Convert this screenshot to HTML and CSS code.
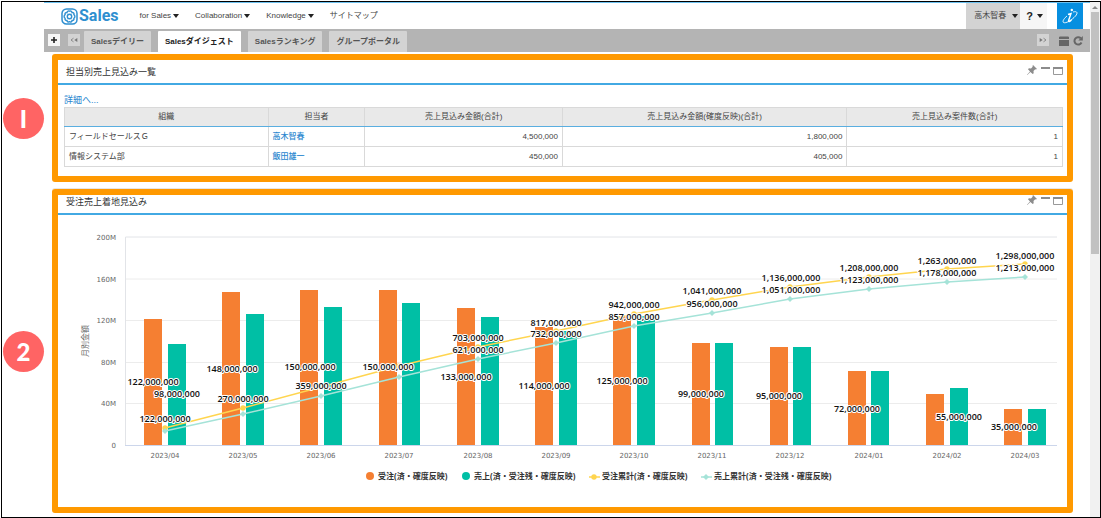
FILE: index.html
```html
<!DOCTYPE html>
<html lang="ja">
<head>
<meta charset="utf-8">
<title>Sales</title>
<link rel="stylesheet" href="styles.css">
</head>
<body>
<div class="frame">
  <div class="main">
    <header class="header">
      <a class="brand" href="#">
        <svg width="17" height="17" viewBox="0 0 17 17" fill="none" stroke="#2f8fd0">
          <rect x="1" y="1" width="15" height="15" rx="4.500" stroke-width="1.5"/>
          <path d="M8.500 3.200C10 2.600 11 3.500 11 4.600C12.300 4.400 13.400 5.400 12.900 6.700C14.200 7.400 14.200 9.600 12.900 10.300C13.400 11.600 12.300 12.700 11 12.500C11 13.700 9.800 14.300 8.500 13.700C7.200 14.300 6 13.700 6 12.500C4.700 12.700 3.600 11.600 4.100 10.300C2.800 9.600 2.800 7.400 4.100 6.700C3.600 5.400 4.700 4.400 6 4.600C6 3.500 7 2.600 8.500 3.200z" stroke-width="1.4"/>
          <circle cx="8.500" cy="8.500" r="2.200" stroke-width="1.4"/>
        </svg>
        <span>Sales</span>
      </a>
      <nav class="nav">
        <a href="#">for Sales<i class="caret"></i></a>
        <a href="#">Collaboration<i class="caret"></i></a>
        <a href="#">Knowledge<i class="caret"></i></a>
        <a href="#">サイトマップ</a>
      </nav>
      <div class="tools">
        <button class="user" type="button">高木智春<i class="caret"></i></button>
        <button class="help" type="button"><b>?</b><i class="caret"></i></button>
        <button class="info" type="button" aria-label="info">
          <svg width="16" height="18" viewBox="0 0 16 18" fill="none" stroke="#fff">
            <path d="M6 7.5 L9 6.5 L6.6 13.5 Q6.3 15 7.8 14.3 L9.5 13" stroke-width="1.4"/>
            <circle cx="9.8" cy="3" r="1.2" fill="#fff" stroke="none"/>
            <path d="M11 5 C15.5 3.8 16 6 13.5 9 C10 13 3.5 17 1.4 15.4 C0.2 14 2.5 11 5 9" stroke-width="0.9"/>
          </svg>
        </button>
      </div>
    </header>
    <div class="tabbar">
      <button class="mini add" type="button" aria-label="add"><svg width="8" height="8" viewBox="0 0 8 8"><path d="M4 1v6M1 4h6" stroke="#222" stroke-width="1.6"/></svg></button>
      <button class="mini" type="button" aria-label="previous"><svg width="8" height="6" viewBox="0 0 8 6"><path d="M3.500 1.200L1 3l2.500 1.800" fill="none" stroke="#777" stroke-width=".8"/><path d="M7.300 1v4L4.300 3z" fill="#777"/></svg></button>
      <div class="tabs">
        <a class="tab" href="#">Salesデイリー</a>
        <a class="tab active" href="#">Salesダイジェスト</a>
        <a class="tab" href="#">Salesランキング</a>
        <a class="tab" href="#">グループポータル</a>
      </div>
      <button class="mini" type="button" aria-label="next"><svg width="8" height="6" viewBox="0 0 8 6"><path d="M4.500 1.200L7 3 4.500 4.800" fill="none" stroke="#777" stroke-width=".8"/><path d="M.7 1v4l3-2z" fill="#777"/></svg></button>
      <div class="actions">
        <button class="plain" type="button" aria-label="layout"><svg width="10" height="10" viewBox="0 0 10 10"><path d="M1 .5h8l1 .5v2H0V1z" fill="#666"/><path d="M0 4h10v6H0z" fill="#666"/></svg></button>
        <button class="plain" type="button" aria-label="reload"><svg width="10" height="10" viewBox="0 0 10 10"><path d="M7.800 2.300A3.700 3.700 0 1 0 8.500 6.500" fill="none" stroke="#666" stroke-width="2"/><path d="M9.800 0v4.500H5.300z" fill="#666"/></svg></button>
      </div>
    </div>

    <section class="row">
      <span class="badge">I</span>
      <div class="panel">
        <div class="panel-head roomy">
          <h2>担当別売上見込み一覧</h2>
          <div class="panel-icons">
            <svg width="10" height="10" viewBox="0 0 10 10" fill="#8c8c8c"><path d="M6 0l4 4-1.200.5-.6-.2L6.500 6l.2 2.300-1 .8L3.400 6.900.3 10 0 9.700l3-3.200L1 4.200l.9-.9L4 3.500l1.700-1.700-.2-.8z"/></svg>
            <svg width="10" height="10" viewBox="0 0 10 10"><path d="M1 2h9v2H1z" fill="#8c8c8c"/></svg>
            <svg width="10" height="10" viewBox="0 0 10 10"><path d="M.5 2.500h9v7h-9z" fill="#fff" stroke="#999"/><path d="M0 2h10v2H0z" fill="#8c8c8c"/></svg>
          </div>
        </div>
        <div class="panel-body">
          <a class="more" href="#">詳細へ...</a>
          <table class="forecast">
            <colgroup><col class="c-org"><col class="c-person"><col class="c-amount"><col class="c-prob"><col class="c-count"></colgroup>
            <thead><tr><th>組織</th><th>担当者</th><th>売上見込み金額(合計)</th><th>売上見込み金額(確度反映)(合計)</th><th>売上見込み案件数(合計)</th></tr></thead>
            <tbody>
              <tr><td>フィールドセールスＧ</td><td><a href="#">高木智春</a></td><td class="num">4,500,000</td><td class="num">1,800,000</td><td class="num">1</td></tr>
              <tr><td>情報システム部</td><td><a href="#">飯田雄一</a></td><td class="num">450,000</td><td class="num">405,000</td><td class="num">1</td></tr>
            </tbody>
          </table>
        </div>
      </div>
    </section>

    <section class="row">
      <span class="badge">2</span>
      <div class="panel lined">
        <div class="panel-head">
          <h2>受注売上着地見込み</h2>
          <div class="panel-icons">
            <svg width="10" height="10" viewBox="0 0 10 10" fill="#8c8c8c"><path d="M6 0l4 4-1.200.5-.6-.2L6.500 6l.2 2.300-1 .8L3.400 6.900.3 10 0 9.700l3-3.200L1 4.200l.9-.9L4 3.500l1.700-1.700-.2-.8z"/></svg>
            <svg width="10" height="10" viewBox="0 0 10 10"><path d="M1 2h9v2H1z" fill="#8c8c8c"/></svg>
            <svg width="10" height="10" viewBox="0 0 10 10"><path d="M.5 2.500h9v7h-9z" fill="#fff" stroke="#999"/><path d="M0 2h10v2H0z" fill="#8c8c8c"/></svg>
          </div>
        </div>
        <svg class="chart" viewBox="58 215 1009 292">
          <path class="grid" d="M126 279H1057M126 320.500H1057M126 362.500H1057M126 403.500H1057"/>
          <path class="edge" d="M125.500 446V237H1057"/>
          <path class="base" d="M125 445.500H1057"/>
          <g class="bar-a">
            <rect x="144" y="319" width="18" height="126"/><rect x="222" y="292" width="18" height="153"/><rect x="300" y="290" width="18" height="155"/><rect x="379" y="290" width="18" height="155"/><rect x="457" y="308" width="18" height="137"/><rect x="535" y="327" width="18" height="118"/><rect x="613" y="316" width="18" height="129"/><rect x="692" y="343" width="18" height="102"/><rect x="770" y="347" width="18" height="98"/><rect x="848" y="371" width="18" height="74"/><rect x="926" y="394" width="18" height="51"/><rect x="1004" y="409" width="18" height="36"/>
          </g>
          <g class="bar-b">
            <rect x="168" y="344" width="18" height="101"/><rect x="246" y="314" width="18" height="131"/><rect x="324" y="307" width="18" height="138"/><rect x="402" y="303" width="18" height="142"/><rect x="481" y="317" width="18" height="128"/><rect x="559" y="331" width="18" height="114"/><rect x="637" y="316" width="18" height="129"/><rect x="715" y="343" width="18" height="102"/><rect x="793" y="347" width="18" height="98"/><rect x="871" y="371" width="18" height="74"/><rect x="950" y="388" width="18" height="57"/><rect x="1028" y="409" width="18" height="36"/>
          </g>
          <defs>
            <marker id="dot" viewBox="0 0 6 6" refX="3" refY="3" markerWidth="6" markerHeight="6" markerUnits="userSpaceOnUse"><circle cx="3" cy="3" r="2.700" fill="#ffd54f"/></marker>
            <marker id="diamond" viewBox="0 0 6 6" refX="3" refY="3" markerWidth="6" markerHeight="6" markerUnits="userSpaceOnUse"><path d="M3 0l3 3-3 3-3-3z" fill="#a5e3d8"/></marker>
          </defs>
          <polyline class="line-a" points="165,428 243,408 321,387 399,366 478,347 556,331 634,314 712,300 790,287 869,277 947,269 1025,264"/>
          <polyline class="line-b" points="165,431 243,414 321,396 399,377 478,359 556,343 634,326 712,313 790,299 869,289 947,282 1025,277"/>
          <g class="value">
            <text x="153" y="385">122,000,000</text><text x="177" y="397">98,000,000</text><text x="165" y="422">122,000,000</text>
            <text x="232" y="372">148,000,000</text><text x="243" y="402">270,000,000</text>
            <text x="310" y="370">150,000,000</text><text x="321" y="389">359,000,000</text>
            <text x="388" y="370">150,000,000</text>
            <text x="478" y="341">703,000,000</text><text x="478" y="353">621,000,000</text><text x="466" y="380">133,000,000</text>
            <text x="556" y="326">817,000,000</text><text x="556" y="337">732,000,000</text><text x="544" y="389">114,000,000</text>
            <text x="634" y="308">942,000,000</text><text x="634" y="320">857,000,000</text><text x="622" y="384">125,000,000</text>
            <text x="712" y="294">1,041,000,000</text><text x="712" y="307">956,000,000</text><text x="701" y="397">99,000,000</text>
            <text x="791" y="281">1,136,000,000</text><text x="791" y="293">1,051,000,000</text><text x="779" y="399">95,000,000</text>
            <text x="869" y="271">1,208,000,000</text><text x="869" y="283">1,123,000,000</text><text x="857" y="412">72,000,000</text>
            <text x="947" y="264">1,263,000,000</text><text x="947" y="276">1,178,000,000</text><text x="959" y="420">55,000,000</text>
            <text x="1025" y="259">1,298,000,000</text><text x="1025" y="271">1,213,000,000</text><text x="1014" y="430">35,000,000</text>
          </g>
          <g class="axis axis-y">
            <text x="116" y="240">200M</text><text x="116" y="282">160M</text><text x="116" y="323">120M</text><text x="116" y="365">80M</text><text x="116" y="406">40M</text><text x="116" y="448">0</text>
          </g>
          <g class="axis axis-x">
            <text x="165" y="458">2023/04</text><text x="243" y="458">2023/05</text><text x="321" y="458">2023/06</text><text x="399" y="458">2023/07</text><text x="478" y="458">2023/08</text><text x="556" y="458">2023/09</text><text x="634" y="458">2023/10</text><text x="712" y="458">2023/11</text><text x="790" y="458">2023/12</text><text x="869" y="458">2024/01</text><text x="947" y="458">2024/02</text><text x="1025" y="458">2024/03</text>
            <text class="axis-title" transform="translate(88 341) rotate(-90)">月別金額</text>
          </g>
          <g class="legend">
            <circle cx="370" cy="476" r="4" fill="#f57f32"/><text x="378" y="479">受注(済・確度反映)</text>
            <circle cx="466" cy="476" r="4" fill="#00bfa5"/><text x="474" y="479">売上(済・受注残・確度反映)</text>
            <polyline class="line-a" points="589,477 594,477 600,477"/><text x="602" y="479">受注累計(済・確度反映)</text>
            <polyline class="line-b" points="701,477 706,477 712,477"/><text x="714" y="479">売上累計(済・受注残・確度反映)</text>
          </g>
        </svg>
      </div>
    </section>
  </div>
  <div class="scroll"><i class="up"></i><div class="thumb"></div></div>
</div>
</body>
</html>
```
FILE: styles.css
```css
* { box-sizing: border-box; }
body {
  margin: 0;
  padding: 1px 0 0 1px;
  background: #fff;
  color: #444;
  font: 8px/14px "Liberation Sans", "Noto Sans CJK JP", sans-serif;
}
a { color: inherit; text-decoration: none; }
button { border: 0; padding: 0; margin: 0; background: none; color: inherit; font: inherit; }
svg { display: block; flex: none; }

.frame { display: flex; border: 1px solid #000; }
.main { flex: 1; min-width: 0; padding-bottom: 4px; }

.header {
  display: flex;
  align-items: stretch;
  height: 27px;
  margin-left: 42px;
  padding-right: 7px;
  border-top: 1px solid #6cc0ee;
}
.brand {
  display: flex;
  align-items: center;
  gap: 1px;
  margin-left: 17px;
  color: #2f8fd0;
  font: bold 16px/26px Roboto, sans-serif;
}
.nav { display: flex; align-items: center; gap: 16px; margin-left: 21px; }
.nav a { display: flex; align-items: center; gap: 2px; }
.caret { border: 3px solid transparent; border-top: 4px solid #222; border-bottom: 0; }
.tools { display: flex; margin-left: auto; }
.user { display: flex; align-items: center; gap: 6px; padding: 0 2px 0 8px; background: #d3d3d3; }
.help { display: flex; align-items: center; gap: 4px; padding: 0 4px 0 6px; background: #f6f6f6; color: #222; font-size: 11px; }
.info { display: flex; align-items: center; justify-content: center; width: 26px; margin-left: 10px; background: #078fe0; }

.tabbar {
  display: flex;
  align-items: center;
  height: 23px;
  margin-left: 42px;
  padding: 0 7px 0 4px;
  background: #b4b4b4;
}
.mini {
  display: flex;
  align-items: center;
  justify-content: center;
  width: 12px;
  height: 12px;
  margin-bottom: 2px;
  background: #d3d3d3;
}
.mini.add { margin-right: 8px; background: #f6f6f6; }
.tabs { display: flex; flex: 1; align-self: flex-end; gap: 7px; margin-left: 4px; }
.tab {
  height: 21px;
  padding: 0 7px;
  border-radius: 1px 1px 0 0;
  background: #d3d3d3;
  color: #555;
  font-weight: bold;
  line-height: 21px;
}
.tab.active { background: #fff; color: #222; }
.actions { display: flex; gap: 4px; margin-left: 10px; }

.row { display: grid; grid-template-columns: 42px 1fr; column-gap: 8px; align-items: center; margin: 2px 17px 0 0; }
.row + .row { margin-top: 7px; }
.badge {
  width: 41px;
  height: 41px;
  margin-left: 1px;
  border-radius: 50%;
  background: #ff6464;
  color: #fff;
  font: 900 24px/41px Lato, sans-serif;
  text-align: center;
}
.panel { min-width: 0; border: 6px solid #ff9900; border-radius: 3px; }
.panel.lined { box-shadow: 0 -1px #e6e6e6; }
.panel-head {
  display: flex;
  justify-content: space-between;
  padding: 0 4px 4px 8px;
  border-bottom: 2px solid #42a9e3;
}
.panel-head.roomy { padding-top: 5px; }
.panel-head h2 { margin: 0; color: #333; font-size: 9px; font-weight: normal; line-height: 14px; }
.panel-icons { display: flex; gap: 3px; }
.panel-body { padding: 8px 4px 9px 6px; }
.more { display: block; color: #2b87cf; font-size: 9px; line-height: 14px; }

.forecast { width: 100%; table-layout: fixed; border-collapse: collapse; }
.c-org { width: 20.4%; }
.c-person { width: 9.7%; }
.c-amount { width: 19.8%; }
.c-prob { width: 28.5%; }
.c-count { width: 21.6%; }
.forecast th, .forecast td { height: 20px; padding: 0 4px; border: 1px solid #d9d9d9; text-align: left; line-height: 14px; }
.forecast th { height: 19px; border-bottom-color: #5aaee0; background: #e9e9e9; font-weight: normal; text-align: center; }
.forecast td a { color: #2b87cf; font-weight: 500; }
.forecast .num { text-align: right; }

.chart { width: 100%; height: auto; }
.grid { stroke: #ececec; }
.edge { fill: none; stroke: #e2e4e8; }
.base { stroke: #ccd6eb; }
.bar-a { fill: #f57f32; }
.bar-b { fill: #00bfa5; }
.line-a, .line-b { fill: none; stroke-width: 1.5; }
.line-a { stroke: #ffd54f; marker-start: url(#dot); marker-mid: url(#dot); marker-end: url(#dot); }
.line-b { stroke: #a5e3d8; marker-start: url(#diamond); marker-mid: url(#diamond); marker-end: url(#diamond); }
.legend polyline { marker-start: none; marker-end: none; }
.value text {
  fill: #111;
  stroke: #fff;
  stroke-width: 2;
  stroke-linejoin: round;
  paint-order: stroke;
  font: 600 9px "Open Sans", "Noto Sans", sans-serif;
  text-anchor: middle;
}
.axis text { fill: #666; font: 7px "DejaVu Sans", sans-serif; }
.axis .axis-title { font: 8px "Noto Sans CJK JP", sans-serif; }
.axis-y text { text-anchor: end; }
.axis-x text { text-anchor: middle; }
.legend text { fill: #333; font: bold 8px "Noto Sans", "Noto Sans CJK JP", sans-serif; }

.scroll { display: flex; flex-direction: column; align-items: center; width: 10px; background: #f1f1f1; }
.up { margin: 4px 0 3px; border: 3px solid transparent; border-top: 0; border-bottom: 3px solid #888; }
.thumb { width: 8px; height: 47%; background: #c1c1c1; }
```
